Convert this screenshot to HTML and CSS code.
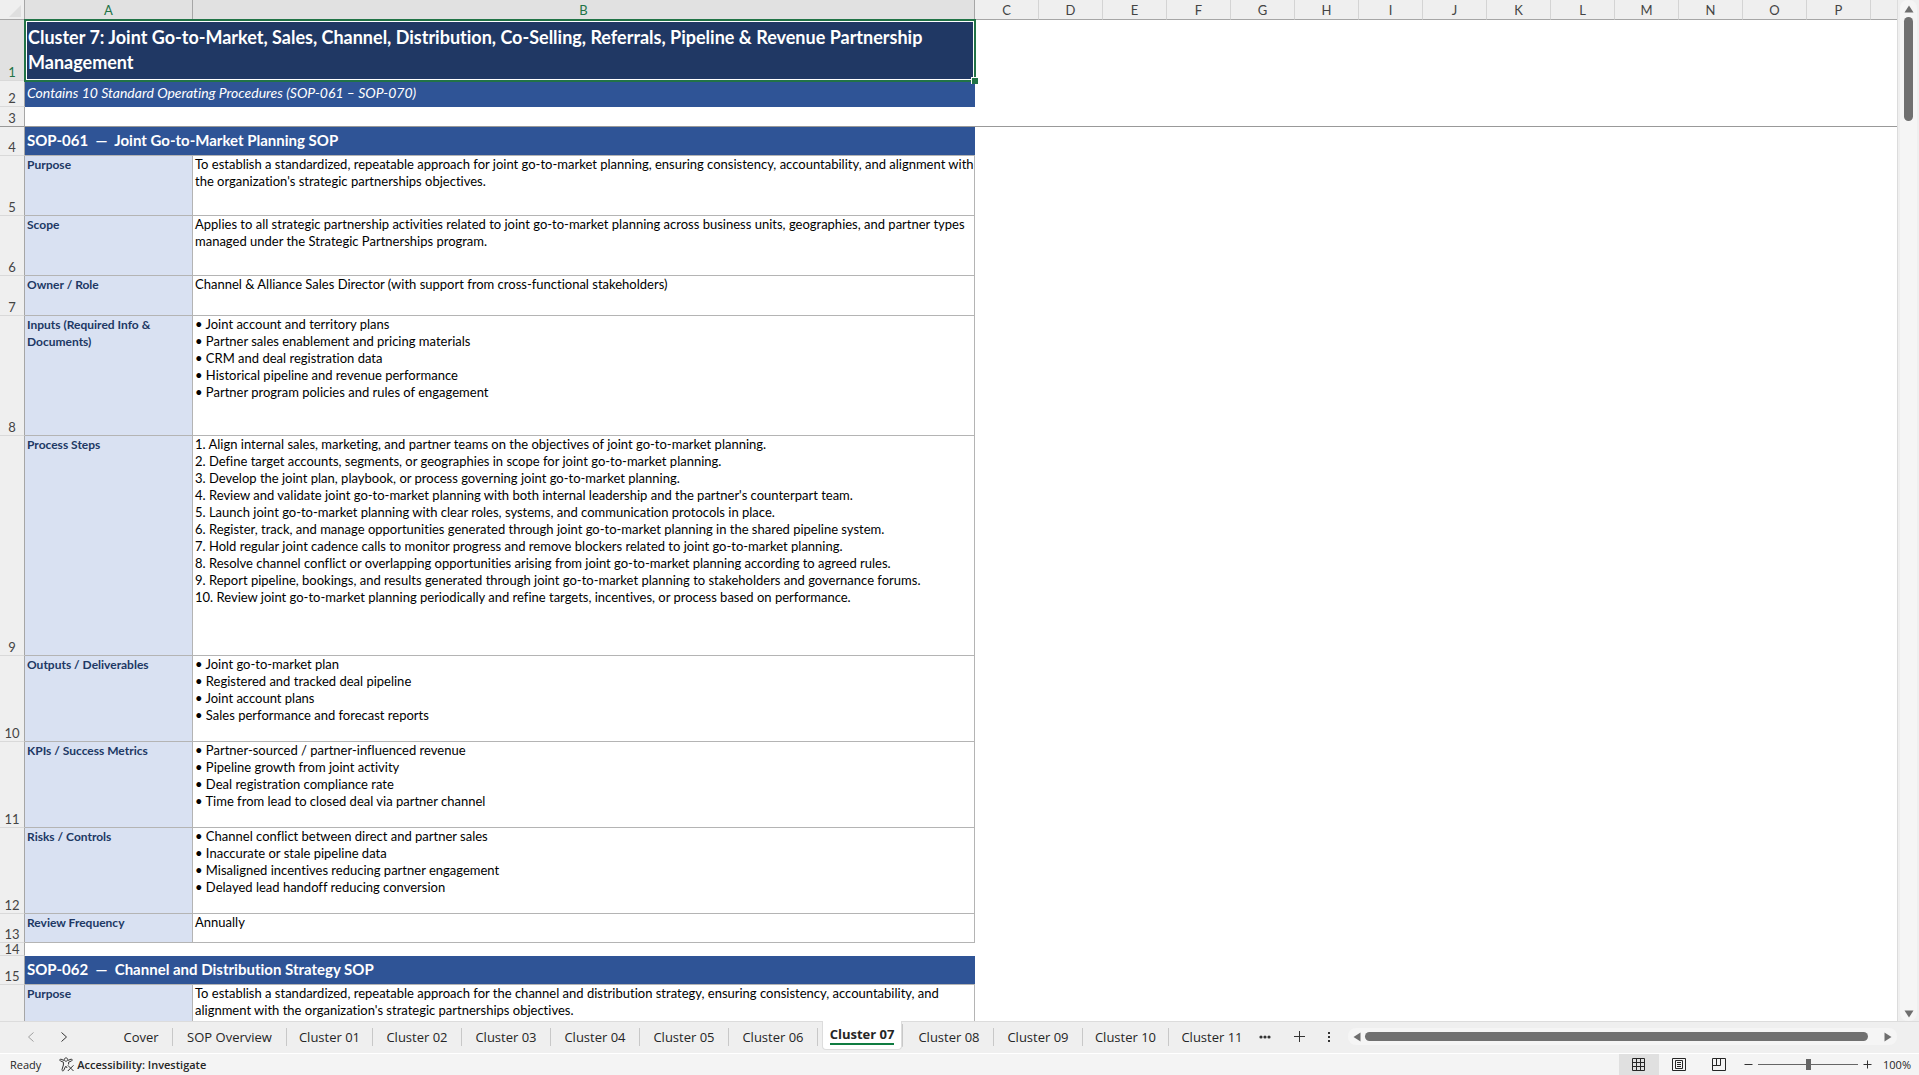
FILE: index.html
```html
<!DOCTYPE html>
<html lang="en">

<head>
    <meta charset="UTF-8">
    <meta name="viewport" content="width=device-width, initial-scale=1.0">
    <title>Cluster 07</title>
    <link rel="stylesheet" href="styles.css">
</head>

<body>
    <div class="workspace">
        <div class="sheet">
            <table class="grid">
                <colgroup>
                    <col class="col-num">
                    <col class="col-a">
                    <col class="col-b">
                    <col span="14" class="col-std">
                    <col>
                </colgroup>
                <thead>
                    <tr>
                        <th class="corner"><svg width="12" height="12" viewBox="0 0 12 12"><path d="M12 0V12H0Z" fill="#dfdfdf"/></svg></th>
                        <th class="selected">A</th>
                        <th class="selected">B</th>
                        <th>C</th>
                        <th>D</th>
                        <th>E</th>
                        <th>F</th>
                        <th>G</th>
                        <th>H</th>
                        <th>I</th>
                        <th>J</th>
                        <th>K</th>
                        <th>L</th>
                        <th>M</th>
                        <th>N</th>
                        <th>O</th>
                        <th>P</th>
                        <th class="last"></th>
                    </tr>
                </thead>
                <tbody class="frozen">
                    <tr class="row-title">
                        <th class="selected">1</th>
                        <td colspan="2" class="title">Cluster 7: Joint Go-to-Market, Sales, Channel, Distribution, Co-Selling, Referrals, Pipeline &amp; Revenue Partnership<br>Management<span class="selection"></span></td>
                        <td colspan="15"></td>
                    </tr>
                    <tr class="row-subtitle">
                        <th>2</th>
                        <td colspan="2" class="subtitle">Contains 10 Standard Operating Procedures (SOP-061 – SOP-070)</td>
                        <td colspan="15"></td>
                    </tr>
                    <tr class="row-blank">
                        <th>3</th>
                        <td colspan="17"></td>
                    </tr>
                </tbody>
                <tbody>
                    <tr class="row-short">
                        <th>4</th>
                        <td colspan="2" class="heading">SOP-061&nbsp; —&nbsp; Joint Go-to-Market Planning SOP</td>
                        <td colspan="15"></td>
                    </tr>
                    <tr class="row-text">
                        <th>5</th>
                        <td class="label">Purpose</td>
                        <td class="value">To establish a standardized, repeatable approach for joint go-to-market planning, ensuring consistency, accountability, and alignment with<br>the organization's strategic partnerships objectives.</td>
                        <td colspan="15"></td>
                    </tr>
                    <tr class="row-text">
                        <th>6</th>
                        <td class="label">Scope</td>
                        <td class="value">Applies to all strategic partnership activities related to joint go-to-market planning across business units, geographies, and partner types<br>managed under the Strategic Partnerships program.</td>
                        <td colspan="15"></td>
                    </tr>
                    <tr class="row-owner">
                        <th>7</th>
                        <td class="label">Owner / Role</td>
                        <td class="value">Channel &amp; Alliance Sales Director (with support from cross-functional stakeholders)</td>
                        <td colspan="15"></td>
                    </tr>
                    <tr class="row-inputs">
                        <th>8</th>
                        <td class="label">Inputs (Required Info &amp;<br>Documents)</td>
                        <td class="value">• Joint account and territory plans<br>
                            • Partner sales enablement and pricing materials<br>
                            • CRM and deal registration data<br>
                            • Historical pipeline and revenue performance<br>
                            • Partner program policies and rules of engagement</td>
                        <td colspan="15"></td>
                    </tr>
                    <tr class="row-steps">
                        <th>9</th>
                        <td class="label">Process Steps</td>
                        <td class="value">1. Align internal sales, marketing, and partner teams on the objectives of joint go-to-market planning.<br>
                            2. Define target accounts, segments, or geographies in scope for joint go-to-market planning.<br>
                            3. Develop the joint plan, playbook, or process governing joint go-to-market planning.<br>
                            4. Review and validate joint go-to-market planning with both internal leadership and the partner's counterpart team.<br>
                            5. Launch joint go-to-market planning with clear roles, systems, and communication protocols in place.<br>
                            6. Register, track, and manage opportunities generated through joint go-to-market planning in the shared pipeline system.<br>
                            7. Hold regular joint cadence calls to monitor progress and remove blockers related to joint go-to-market planning.<br>
                            8. Resolve channel conflict or overlapping opportunities arising from joint go-to-market planning according to agreed rules.<br>
                            9. Report pipeline, bookings, and results generated through joint go-to-market planning to stakeholders and governance forums.<br>
                            10. Review joint go-to-market planning periodically and refine targets, incentives, or process based on performance.</td>
                        <td colspan="15"></td>
                    </tr>
                    <tr class="row-list">
                        <th>10</th>
                        <td class="label">Outputs / Deliverables</td>
                        <td class="value">• Joint go-to-market plan<br>
                            • Registered and tracked deal pipeline<br>
                            • Joint account plans<br>
                            • Sales performance and forecast reports</td>
                        <td colspan="15"></td>
                    </tr>
                    <tr class="row-list">
                        <th>11</th>
                        <td class="label">KPIs / Success Metrics</td>
                        <td class="value">• Partner-sourced / partner-influenced revenue<br>
                            • Pipeline growth from joint activity<br>
                            • Deal registration compliance rate<br>
                            • Time from lead to closed deal via partner channel</td>
                        <td colspan="15"></td>
                    </tr>
                    <tr class="row-list">
                        <th>12</th>
                        <td class="label">Risks / Controls</td>
                        <td class="value">• Channel conflict between direct and partner sales<br>
                            • Inaccurate or stale pipeline data<br>
                            • Misaligned incentives reducing partner engagement<br>
                            • Delayed lead handoff reducing conversion</td>
                        <td colspan="15"></td>
                    </tr>
                    <tr class="row-short">
                        <th>13</th>
                        <td class="label">Review Frequency</td>
                        <td class="value">Annually</td>
                        <td colspan="15"></td>
                    </tr>
                    <tr class="row-gap">
                        <th>14</th>
                        <td colspan="17"></td>
                    </tr>
                    <tr class="row-short">
                        <th>15</th>
                        <td colspan="2" class="heading">SOP-062&nbsp; —&nbsp; Channel and Distribution Strategy SOP</td>
                        <td colspan="15"></td>
                    </tr>
                    <tr class="row-text">
                        <th></th>
                        <td class="label">Purpose</td>
                        <td class="value">To establish a standardized, repeatable approach for the channel and distribution strategy, ensuring consistency, accountability, and<br>alignment with the organization's strategic partnerships objectives.</td>
                        <td colspan="15"></td>
                    </tr>
                </tbody>
            </table>
        </div>
        <div class="scroll-y">
            <button class="arrow" aria-label="Scroll up"><svg width="10" height="8" viewBox="0 0 10 8"><path d="M5 0.5L9.5 7.5H0.5Z"/></svg></button>
            <div class="thumb"></div>
            <button class="arrow bottom" aria-label="Scroll down"><svg width="10" height="8" viewBox="0 0 10 8"><path d="M5 7.5L9.5 0.5H0.5Z"/></svg></button>
        </div>
    </div>

    <div class="tabbar">
        <div class="tab-nav">
            <button class="icon-btn off" aria-label="Previous sheet"><svg width="8" height="12" viewBox="0 0 8 12"><path d="M6.5 1.5L1.5 6L6.5 10.5"/></svg></button>
            <button class="icon-btn" aria-label="Next sheet"><svg width="8" height="12" viewBox="0 0 8 12"><path d="M1.5 1.5L6.5 6L1.5 10.5"/></svg></button>
        </div>
        <div class="tabs">
            <button class="tab cover">Cover</button>
            <button class="tab overview">SOP Overview</button>
            <button class="tab narrow">Cluster 01</button>
            <button class="tab">Cluster 02</button>
            <button class="tab">Cluster 03</button>
            <button class="tab">Cluster 04</button>
            <button class="tab">Cluster 05</button>
            <button class="tab">Cluster 06</button>
            <button class="tab active"><span>Cluster 07</span></button>
            <button class="tab">Cluster 08</button>
            <button class="tab">Cluster 09</button>
            <button class="tab narrow">Cluster 10</button>
            <button class="tab narrow last">Cluster 11</button>
        </div>
        <div class="tab-tools">
            <button class="icon-btn" aria-label="More sheets"><svg width="12" height="4" viewBox="0 0 12 4"><g class="dots"><circle cx="2" cy="2" r="1.6"/><circle cx="6" cy="2" r="1.6"/><circle cx="10" cy="2" r="1.6"/></g></svg></button>
            <button class="icon-btn" aria-label="New sheet"><svg width="11" height="11" viewBox="0 0 11 11"><path d="M5.5 0V11M0 5.5H11"/></svg></button>
            <button class="icon-btn" aria-label="Resize tabs"><svg width="3" height="12" viewBox="0 0 3 12"><g class="dots"><rect y="1" width="2" height="2"/><rect y="5" width="2" height="2"/><rect y="9" width="2" height="2"/></g></svg></button>
        </div>
        <div class="scroll-x">
            <button class="arrow" aria-label="Scroll left"><svg width="8" height="10" viewBox="0 0 8 10"><path d="M0.5 5L7.5 0.5V9.5Z"/></svg></button>
            <div class="thumb"></div>
            <button class="arrow" aria-label="Scroll right"><svg width="8" height="10" viewBox="0 0 8 10"><path d="M7.5 5L0.5 0.5V9.5Z"/></svg></button>
        </div>
    </div>

    <div class="statusbar">
        <span class="ready">Ready</span>
        <button class="access">
            <svg width="16" height="15" viewBox="0 0 16 15"><path d="M7 4.2C5.8 4.2 5.3 3.4 5.3 2.6C5.3 1.6 6 0.9 7 0.9S8.7 1.6 8.7 2.6C8.7 3.4 8.2 4.2 7 4.2M5 3.4L2 2.2C0.8 1.8 0.3 3.4 1.4 3.9L4.4 5.2V8L3 12.6C2.8 14 4.3 14.4 4.8 13.2L6.5 9.5H7.3L8 11M9 3.4L12 2.2C13.2 1.8 13.7 3.4 12.6 3.9L9.6 5.2V7.5M8.8 8.3L14.5 14M14.5 8.3L8.8 14"/></svg>
            Accessibility: Investigate
        </button>
        <div class="views">
            <button class="view on" aria-label="Normal"><svg width="14" height="14" viewBox="0 0 14 14"><path d="M0.5 0.5H12.5V12.5H0.5ZM4.5 0.5V12.5M8.5 0.5V12.5M0.5 4.5H12.5M0.5 8.5H12.5"/></svg></button>
            <button class="view" aria-label="Page Layout"><svg width="14" height="14" viewBox="0 0 14 14"><path d="M0.5 0.5H13.5V12.5H0.5ZM3.5 2.5H10.5V10.5H3.5ZM5 4.5H9M5 6.5H9M5 8.5H9"/></svg></button>
            <button class="view" aria-label="Page Break Preview"><svg width="14" height="14" viewBox="0 0 14 14"><path d="M0.5 0.5H13.5V12.5H0.5ZM4.5 0.5V7.5M8.5 0.5V7.5M0.5 7.5H8.5"/></svg></button>
        </div>
        <button class="zoom-btn" aria-label="Zoom out"><svg width="9" height="9" viewBox="0 0 9 9"><path d="M0.5 4.5H8.5"/></svg></button>
        <input type="range" class="zoom" min="0" max="100" value="50" aria-label="Zoom">
        <button class="zoom-btn" aria-label="Zoom in"><svg width="9" height="9" viewBox="0 0 9 9"><path d="M0.5 4.5H8.5M4.5 0.5V8.5"/></svg></button>
        <button class="percent">100%</button>
    </div>
</body>

</html>
```
FILE: styles.css
```css
* {
    box-sizing: border-box;
}

body {
    margin: 0;
    height: 100vh;
    display: flex;
    flex-direction: column;
    overflow: hidden;
    background-color: #efefef;
    color: #262626;
    font-family: "Open Sans", "Segoe UI", sans-serif;
}

button {
    border: none;
    padding: 0;
    background: none;
    color: inherit;
    font-family: inherit;
    cursor: pointer;
}

svg {
    display: block;
}

/* sheet */
.workspace {
    flex: 1;
    min-height: 0;
    display: flex;
}

.sheet {
    flex: 1;
    min-width: 0;
    overflow: hidden;
    background-color: white;
    border-right: 1px solid #dcdcdc;
}

.grid {
    width: 100%;
    table-layout: fixed;
    border-collapse: separate;
    border-spacing: 0;
    font-family: Lato, Calibri, sans-serif;
    font-size: 13px;
    font-variant-ligatures: none;
    line-height: 17px;
}

.col-num {
    width: 25px;
}

.col-a {
    width: 168px;
}

.col-b {
    width: 782px;
}

.col-std {
    width: 64px;
}

.grid th {
    padding: 0;
    font-size: 13px;
    font-weight: normal;
    color: #444;
    background-color: #efefef;
}

.grid thead th {
    height: 20px;
    padding-top: 2px;
    border-bottom: 1px solid #a6a6a6;
    border-right: 1px solid #d4d4d4;
}

.grid thead th.last {
    border-right: none;
}

.grid thead th.corner {
    border-right-color: #a6a6a6;
}

.grid thead th.corner svg {
    margin: 0 3px 0 auto;
}

.grid tbody th {
    vertical-align: bottom;
    line-height: 15px;
    border-right: 1px solid #a6a6a6;
    border-bottom: 1px solid #d9d9d9;
}

.grid th.selected {
    background-color: #e1e1e1;
    color: #217346;
}

.grid thead th.selected {
    border-right-color: #a6a6a6;
}

.grid td {
    padding: 0 2px;
    vertical-align: top;
    white-space: nowrap;
}

.grid .title {
    position: relative;
    padding: 5px 3px 0;
    background-color: #203864;
    color: white;
    font-size: 18px;
    font-weight: bold;
    line-height: 25px;
}

.selection {
    position: absolute;
    inset: -1px;
    border: 2px solid #217346;
    outline: 1px solid white;
    outline-offset: -3px;
}

.selection::after {
    content: "";
    position: absolute;
    right: -4px;
    bottom: -4px;
    width: 6px;
    height: 6px;
    border: 1px solid white;
    border-width: 1px 0 0 1px;
    background-color: #217346;
}

.grid .subtitle {
    padding-top: 3px;
    background-color: #2f5496;
    color: white;
    font-size: 14px;
    font-style: italic;
}

.grid .heading {
    padding-top: 5px;
    background-color: #2f5496;
    color: white;
    font-size: 15px;
    font-weight: bold;
    border-bottom: 1px solid #b4b4b4;
}

.grid .label {
    background-color: #d9e1f2;
    color: #203864;
    font-size: 12px;
    font-weight: bold;
    border-right: 1px solid #b4b4b4;
    border-bottom: 1px solid #b4b4b4;
}

.grid .value {
    color: black;
    border-right: 1px solid #b4b4b4;
    border-bottom: 1px solid #b4b4b4;
}

/* freeze line under the last frozen row */
.grid .row-blank > * {
    border-bottom: 1px solid #999;
}

.row-title {
    height: 61px;
}

.row-subtitle {
    height: 26px;
}

.row-blank {
    height: 20px;
}

.row-short {
    height: 29px;
}

.row-text {
    height: 60px;
}

.row-owner {
    height: 40px;
}

.row-inputs {
    height: 120px;
}

.row-steps {
    height: 220px;
}

.row-list {
    height: 86px;
}

.row-gap {
    height: 13px;
}

.grid .row-gap th {
    line-height: 12px;
}

/* scrollbars */
.scroll-y {
    width: 17px;
    margin: 0 2px;
    padding: 5px 0 3px;
    display: flex;
    flex-direction: column;
    align-items: center;
    border-radius: 8px;
    background-color: #f5f5f5;
}

.arrow {
    fill: #6e6e6e;
}

.arrow.bottom {
    margin-top: auto;
}

.thumb {
    border-radius: 5px;
    background-color: #707070;
}

.scroll-y .thumb {
    width: 9px;
    height: 104px;
    margin-top: 4px;
}

.scroll-x {
    flex: 1;
    height: 17px;
    margin-right: 22px;
    padding: 0 5px;
    display: flex;
    align-items: center;
    border-radius: 8px;
    background-color: #f5f5f5;
}

.scroll-x .thumb {
    flex: 1;
    height: 9px;
    margin: 0 16px 0 4px;
}

/* sheet tabs */
.tabbar {
    height: 33px;
    padding-bottom: 2px;
    display: flex;
    align-items: center;
    border-top: 1px solid #dcdcdc;
    border-bottom: 1px solid white;
}

.tab-nav {
    width: 110px;
    padding-left: 27px;
    display: flex;
    gap: 25px;
}

.icon-btn {
    fill: none;
    stroke: #333;
    stroke-width: 1;
}

.icon-btn.off {
    stroke: #a0a0a0;
}

.dots {
    fill: #333;
    stroke: none;
}

.tabs {
    display: flex;
    align-items: center;
    align-self: stretch;
}

.tab {
    width: 89px;
    height: 18px;
    border-right: 1px solid #c8c8c8;
    font-size: 13px;
    line-height: 18px;
    white-space: nowrap;
}

.tab.cover {
    width: 63px;
}

.tab.overview {
    width: 114px;
}

.tab.narrow {
    width: 86px;
}

.tab.last {
    border-right: none;
}

.tab.active {
    align-self: flex-start;
    width: 80px;
    height: 29px;
    margin: -1px 3px 0 4px;
    border: 1px solid #dcdcdc;
    border-top: none;
    border-radius: 0 0 4px 4px;
    background-color: white;
    font-weight: bold;
    box-shadow: 4px 0 0 -3px #c8c8c8;
}

.tab.active span {
    display: inline-block;
    border-bottom: 2px solid #107c41;
}

.tab-tools {
    width: 93px;
    padding-left: 4px;
    display: flex;
    align-items: center;
    gap: 23px;
}

/* status bar */
.statusbar {
    height: 21px;
    padding: 0 8px 0 10px;
    display: flex;
    align-items: center;
    background-color: #f4f4f4;
    font-size: 11px;
}

.access {
    display: flex;
    align-items: center;
    gap: 2px;
    margin-left: 18px;
    font-size: 11px;
    font-weight: 600;
}

.access svg {
    fill: none;
    stroke: #333;
    stroke-width: 1;
}

.views {
    display: flex;
    align-self: stretch;
    margin: 0 5px 0 auto;
}

.view {
    width: 40px;
    display: flex;
    align-items: center;
    justify-content: center;
    fill: none;
    stroke: #262626;
}

.view.on {
    background-color: #e0e0e0;
}

.zoom-btn {
    fill: none;
    stroke: #333;
}

.zoom {
    appearance: none;
    width: 100px;
    height: 11px;
    margin: 0 5px;
    background: linear-gradient(#666, #666) center / 100% 1px no-repeat;
}

.zoom::-webkit-slider-thumb {
    appearance: none;
    width: 5px;
    height: 11px;
    background-color: #666;
}

.percent {
    width: 39px;
    font-size: 11px;
    text-align: right;
}
```
